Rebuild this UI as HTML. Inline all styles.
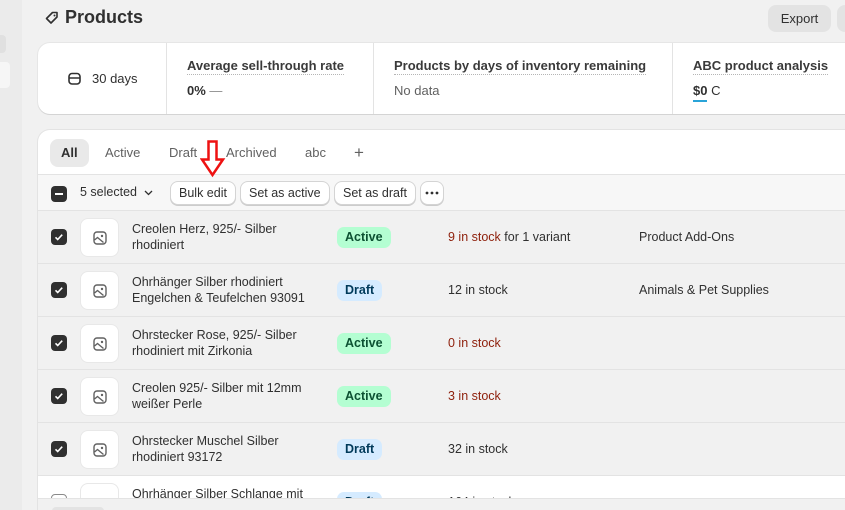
<!DOCTYPE html>
<html><head><meta charset="utf-8"><style>
*{box-sizing:border-box;margin:0;padding:0}
html,body{width:845px;height:510px;overflow:hidden}
body{background:#f1f1f1;font-family:"Liberation Sans",sans-serif;color:#303030;font-size:13px;position:relative}
.side{position:absolute;left:0;top:0;width:22px;height:510px;background:#ebebeb}
.side .a{position:absolute;left:0;top:35px;width:6px;height:18px;background:#e0e0e0;border-radius:0 4px 4px 0}
.side .b{position:absolute;left:0;top:62px;width:10px;height:26px;background:#f6f6f6;border-radius:0 4px 4px 0}
.title{position:absolute;left:45px;top:7px;font-size:18px;font-weight:bold;color:#303030;display:flex;align-items:center;gap:6px}
.export{position:absolute;left:768px;top:5px;width:63px;height:27px;background:#e3e3e3;border-radius:8px;text-align:center;line-height:27px;font-size:13px}
.export2{position:absolute;left:837px;top:5px;width:8px;height:27px;background:#e3e3e3;border-radius:8px 0 0 8px}
.stats{position:absolute;left:38px;top:43px;width:807px;height:71px;background:#fff;border-radius:12px 0 0 12px;box-shadow:0 1px 0 #d4d4d4,0 0 0 1px #e6e6e6}
.st{position:absolute;top:0;height:71px;border-left:1px solid #e3e3e3;padding:15px 0 0 20px}
.lbl{font-weight:bold;font-size:13px;border-bottom:1px dotted #b5b5b5;display:inline-block;padding-bottom:1px;color:#3a3a3a}
.val{margin-top:8px;font-size:13px;color:#616161}
.card{position:absolute;left:38px;top:130px;width:807px;height:380px;background:#fff;border-radius:12px 0 0 0;box-shadow:0 0 0 1px #e3e3e3;overflow:hidden}
.tabs{height:44px;position:relative}
.tab{position:absolute;top:9px;height:28px;line-height:28px;font-size:13px;color:#616161;padding:0 11px}
.tab.on{background:#e9e9e9;border-radius:8px;color:#303030;font-weight:bold}
.bar{position:absolute;top:44px;left:0;right:0;height:37px;background:#f7f7f7;border-top:1px solid #e3e3e3;border-bottom:1px solid #e3e3e3}
.btn{position:absolute;top:6px;height:24px;line-height:22px;border:1px solid #d4d4d4;border-radius:8px;background:#fff;font-size:12.5px;padding:0 8px;box-shadow:0 1px 0 #ccc}
.cb{position:absolute;width:16px;height:16px;border-radius:4px;background:#303030}
.row{position:absolute;left:0;right:0;height:53px;background:#f1f1f1;border-bottom:1px solid #e3e3e3}
.row .cb{left:13px;top:18px}
.thumb{position:absolute;left:42px;top:7px;width:39px;height:39px;background:#fff;border-radius:8px;border:1px solid #e8e8e8}
.thumb svg{position:absolute;left:12px;top:12px}
.name{position:absolute;left:94px;top:10px;font-size:12.5px;line-height:16px;color:#303030}
.badge{position:absolute;left:299px;top:16px;height:21px;line-height:21px;border-radius:7px;padding:0 8px;font-size:12.5px;font-weight:bold}
.act{background:#b4fed2;color:#0c5132}.dr{background:#d5ebff;color:#003a5a}
.stock{position:absolute;left:410px;top:19px;font-size:12.5px}
.red{color:#8e1f0b}
.cat{position:absolute;left:601px;top:19px;font-size:12.5px}
</style></head><body>
<div class="side"><div class="a"></div><div class="b"></div></div>
<div class="title"><svg width="14" height="14" viewBox="0 0 14 14"><path d="M7.5 1.5h4.5v4.5l-6 6-4.5-4.5z" fill="none" stroke="#303030" stroke-width="1.6" stroke-linejoin="round"/><circle cx="9.5" cy="4.5" r="1" fill="#303030"/></svg>Products</div>
<div class="export">Export</div><div class="export2"></div>
<div class="stats">
 <div style="position:absolute;left:30px;top:28px;display:flex;align-items:center;gap:11px;font-size:13px"><svg width="13" height="13" viewBox="0 0 13 13"><rect x="1" y="1.5" width="11" height="10.5" rx="3" fill="none" stroke="#303030" stroke-width="1.6"/><line x1="1" y1="6" x2="12" y2="6" stroke="#303030" stroke-width="1.5"/></svg>30 days</div>
 <div class="st" style="left:128px;width:207px"><span class="lbl">Average sell-through rate</span><div class="val" style="color:#303030;font-weight:bold">0% <span style="color:#8a8a8a;font-weight:normal">—</span></div></div>
 <div class="st" style="left:335px;width:299px"><span class="lbl">Products by days of inventory remaining</span><div class="val">No data</div></div>
 <div class="st" style="left:634px;width:173px"><span class="lbl">ABC product analysis</span><div class="val" style="color:#303030"><span style="font-weight:bold;border-bottom:2px solid #2aa4d8;padding-bottom:2px">$0</span> C</div></div>
</div>
<div class="card">
 <div class="tabs">
  <div class="tab on" style="left:12px">All</div>
  <div class="tab" style="left:56px">Active</div>
  <div class="tab" style="left:120px">Draft</div>
  <div class="tab" style="left:177px">Archived</div>
  <div class="tab" style="left:256px">abc</div>
  <div class="tab" style="left:305px;font-size:17px">+</div>
 </div>
 <div class="bar">
  <div class="cb" style="left:13px;top:11px"><div style="position:absolute;left:4px;top:7px;width:8px;height:2px;background:#fff"></div></div>
  <div style="position:absolute;left:42px;top:10px;font-size:12.5px">5 selected&nbsp; <svg width="9" height="6" viewBox="0 0 9 6"><path d="M1 1l3.5 3.5L8 1" stroke="#303030" stroke-width="1.3" fill="none"/></svg></div>
  <div class="btn" style="left:132px">Bulk edit</div>
  <div class="btn" style="left:202px">Set as active</div>
  <div class="btn" style="left:296px">Set as draft</div>
  <div class="btn" style="left:382px;width:24px;padding:0"><svg style="position:absolute;left:4px;top:9px" width="14" height="4"><circle cx="2" cy="2" r="1.4" fill="#303030"/><circle cx="7" cy="2" r="1.4" fill="#303030"/><circle cx="12" cy="2" r="1.4" fill="#303030"/></svg></div>
 </div>
 <div class="row" style="top:81px"><div class="cb"><svg width="16" height="16"><path d="M4.5 8.3l2.2 2.2 4.5-4.8" stroke="#fff" stroke-width="1.6" fill="none"/></svg></div><div class="thumb"><svg width="14" height="14" viewBox="0 0 14 14"><rect x="1" y="1" width="12" height="12" rx="3" fill="none" stroke="#616161" stroke-width="1.4"/><circle cx="9" cy="5" r="1.2" fill="#616161"/><path d="M1.5 9l3-2.5 6 5" stroke="#616161" stroke-width="1.4" fill="none"/></svg></div><div class="name">Creolen Herz, 925/- Silber<br>rhodiniert</div><div class="badge act">Active</div><div class="stock"><span class="red">9 in stock</span> for 1 variant</div><div class="cat">Product Add-Ons</div></div>
 <div class="row" style="top:134px"><div class="cb"><svg width="16" height="16"><path d="M4.5 8.3l2.2 2.2 4.5-4.8" stroke="#fff" stroke-width="1.6" fill="none"/></svg></div><div class="thumb"><svg width="14" height="14" viewBox="0 0 14 14"><rect x="1" y="1" width="12" height="12" rx="3" fill="none" stroke="#616161" stroke-width="1.4"/><circle cx="9" cy="5" r="1.2" fill="#616161"/><path d="M1.5 9l3-2.5 6 5" stroke="#616161" stroke-width="1.4" fill="none"/></svg></div><div class="name">Ohrhänger Silber rhodiniert<br>Engelchen &amp; Teufelchen 93091</div><div class="badge dr">Draft</div><div class="stock">12 in stock</div><div class="cat">Animals &amp; Pet Supplies</div></div>
 <div class="row" style="top:187px"><div class="cb"><svg width="16" height="16"><path d="M4.5 8.3l2.2 2.2 4.5-4.8" stroke="#fff" stroke-width="1.6" fill="none"/></svg></div><div class="thumb"><svg width="14" height="14" viewBox="0 0 14 14"><rect x="1" y="1" width="12" height="12" rx="3" fill="none" stroke="#616161" stroke-width="1.4"/><circle cx="9" cy="5" r="1.2" fill="#616161"/><path d="M1.5 9l3-2.5 6 5" stroke="#616161" stroke-width="1.4" fill="none"/></svg></div><div class="name">Ohrstecker Rose, 925/- Silber<br>rhodiniert mit Zirkonia</div><div class="badge act">Active</div><div class="stock red">0 in stock</div></div>
 <div class="row" style="top:240px"><div class="cb"><svg width="16" height="16"><path d="M4.5 8.3l2.2 2.2 4.5-4.8" stroke="#fff" stroke-width="1.6" fill="none"/></svg></div><div class="thumb"><svg width="14" height="14" viewBox="0 0 14 14"><rect x="1" y="1" width="12" height="12" rx="3" fill="none" stroke="#616161" stroke-width="1.4"/><circle cx="9" cy="5" r="1.2" fill="#616161"/><path d="M1.5 9l3-2.5 6 5" stroke="#616161" stroke-width="1.4" fill="none"/></svg></div><div class="name">Creolen 925/- Silber mit 12mm<br>weißer Perle</div><div class="badge act">Active</div><div class="stock red">3 in stock</div></div>
 <div class="row" style="top:293px"><div class="cb"><svg width="16" height="16"><path d="M4.5 8.3l2.2 2.2 4.5-4.8" stroke="#fff" stroke-width="1.6" fill="none"/></svg></div><div class="thumb"><svg width="14" height="14" viewBox="0 0 14 14"><rect x="1" y="1" width="12" height="12" rx="3" fill="none" stroke="#616161" stroke-width="1.4"/><circle cx="9" cy="5" r="1.2" fill="#616161"/><path d="M1.5 9l3-2.5 6 5" stroke="#616161" stroke-width="1.4" fill="none"/></svg></div><div class="name">Ohrstecker Muschel Silber<br>rhodiniert 93172</div><div class="badge dr">Draft</div><div class="stock">32 in stock</div></div>
 <div class="row" style="top:346px;height:22px;background:#fff;border:none;overflow:hidden"><div class="cb" style="background:#fff;border:1px solid #8a8a8a"></div><div class="thumb"></div><div class="name">Ohrhänger Silber Schlange mit</div><div class="badge dr">Draft</div><div class="stock">164 in stock</div></div>
 <div style="position:absolute;left:0;right:0;top:368px;height:12px;background:#f1f1f1;border-top:1px solid #e3e3e3"><div style="position:absolute;left:14px;top:8px;width:52px;height:4px;background:#e3e3e3;border-radius:6px 6px 0 0"></div></div>
</div>
<svg style="position:absolute;left:200px;top:140px" width="26" height="38" viewBox="0 0 26 38"><path d="M8.5 1.5h8v18h6.5L12.5 35 2 19.5h6.5z" fill="#fff" stroke="#e11" stroke-width="2.5" stroke-linejoin="miter"/></svg>
</body></html>
